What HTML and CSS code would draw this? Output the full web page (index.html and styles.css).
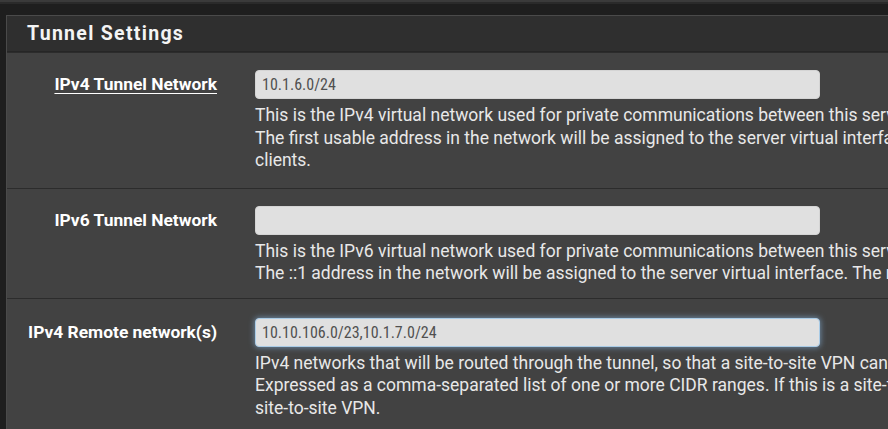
FILE: index.html
```html
<!DOCTYPE html>
<html>
<head>
  <meta charset="utf-8">
  <title>OpenVPN Server - Tunnel Settings</title>
  <link rel="stylesheet" href="styles.css">
</head>
<body>
  <div class="topbar"></div>

  <div class="panel">
    <div class="panel-heading">
      <h2 class="panel-title">Tunnel Settings</h2>
    </div>

    <!-- IPv4 tunnel network -->
    <div class="form-row">
      <div class="form-label"><span class="linked">IPv4 Tunnel Network</span></div>
      <div class="form-field">
        <input type="text" class="form-control" value="10.1.6.0/24">
        <div class="help-block">
          This is the IPv4 virtual network used for private communications between this server and client hosts expressed using CIDR notation (e.g. 10.0.8.0/24).<br>
          The first usable address in the network will be assigned to the server virtual interface. The remaining usable addresses will be assigned to connecting<br>
          clients.
        </div>
      </div>
    </div>

    <!-- IPv6 tunnel network -->
    <div class="form-row short">
      <div class="form-label">IPv6 Tunnel Network</div>
      <div class="form-field">
        <input type="text" class="form-control" value="">
        <div class="help-block">
          This is the IPv6 virtual network used for private communications between this server and client hosts expressed using CIDR notation (e.g. fe80::/64).<br>
          The ::1 address in the network will be assigned to the server virtual interface. The remaining addresses will be assigned to connecting clients.
        </div>
      </div>
    </div>

    <!-- IPv4 remote networks -->
    <div class="form-row last">
      <div class="form-label">IPv4 Remote network(s)</div>
      <div class="form-field">
        <input type="text" class="form-control focused" value="10.10.106.0/23,10.1.7.0/24">
        <div class="help-block">
          IPv4 networks that will be routed through the tunnel, so that a site-to-site VPN can be established without manually changing the routing tables.<br>
          Expressed as a comma-separated list of one or more CIDR ranges. If this is a site-to-site VPN, enter the remote LAN/s here. May be left blank for non<br>
          site-to-site VPN.
        </div>
      </div>
    </div>
  </div>
</body>
</html>
```
FILE: styles.css
```css
html, body {
  overflow: hidden;
}
body {
  margin: 0;
  background: #1e1e1e;
  font-family: Roboto, sans-serif;
  color: #e6e6e6;
}
.topbar {
  height: 2px;
  background: #3a3a3a;
  border-bottom: 2px solid #2a2a2a;
}
.panel {
  margin: 11px 0 0 6px;
  border: 1px solid #4a4a4a;
  border-right: none;
  background: #424242;
}
.panel-heading {
  background: #2f2f2f;
  height: 35px;
  border-bottom: 1px solid #262626;
  padding-left: 20px;
  display: flex;
  align-items: center;
}
.panel-title {
  margin: 0;
  font-size: 19.5px;
  font-weight: bold;
  letter-spacing: 1.3px;
  color: #f4f4f4;
}
.form-row {
  display: flex;
  border-top: 1px solid #2c2c2c;
  padding: 17px 0 16px;
}
.form-row:first-of-type {
  border-top: none;
}
.form-row.short {
  padding-bottom: 13px;
}
.form-row.last {
  padding-top: 19px;
}
.form-label {
  width: 210px;
  flex: none;
  text-align: right;
  font-size: 17.4px;
  font-weight: bold;
  color: #fff;
  padding-top: 4px;
}
.linked {
  text-decoration: underline;
  text-underline-offset: 3px;
}
.form-field {
  margin-left: 38px;
  flex: none;
  width: 1400px;
}
.form-control {
  display: block;
  box-sizing: border-box;
  width: 565px;
  height: 29px;
  margin: 0 0 5px;
  padding: 0 6px;
  border: 1px solid #d4d4d4;
  border-radius: 4px;
  background: #e0e0e0;
  font-family: Roboto, sans-serif;
  font-size: 16px;
  font-stretch: condensed;
  color: #505050;
}
.form-control.focused {
  border-color: #a9cbe6;
  box-shadow: 0 0 6px rgba(140, 190, 235, 0.7);
}
.help-block {
  font-size: 17.5px;
  line-height: 22.5px;
  white-space: nowrap;
  color: #e8e8e8;
}
```
